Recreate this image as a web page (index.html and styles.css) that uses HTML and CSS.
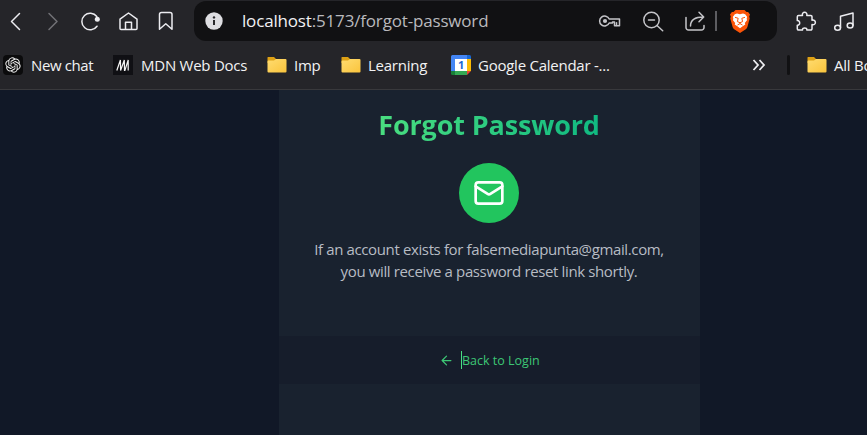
FILE: index.html
```html
<!DOCTYPE html>
<html lang="en">
<head>
<meta charset="utf-8">
<title>Forgot Password</title>
<link rel="stylesheet" href="styles.css">
</head>
<body>
<header class="browser">
  <nav class="toolbar">
    <svg class="icon" viewBox="0 0 24 24"><path d="M16.500 4.500 8.500 12.500l8 8"/></svg>
    <svg class="icon dim" viewBox="0 0 24 24"><path d="m8 4.500 8 8-8 8"/></svg>
    <svg class="icon" viewBox="0 0 24 24"><path d="M18 17.200A8.300 8.300 0 1 1 17.800 7.500"/><circle cx="18.300" cy="10.300" r="2.500" fill="currentColor" stroke="none"/></svg>
    <svg class="icon" viewBox="0 0 24 24"><path d="M3 10.200 11.500 4l8.500 6.200v9.300a1 1 0 0 1-1 1H4a1 1 0 0 1-1-1zM8.500 20.500v-7.300h6v7.300"/></svg>
    <svg class="icon" viewBox="0 0 24 24"><path d="M4.500 20.300V5.500a2 2 0 0 1 2-2h8.500a2 2 0 0 1 2 2v14.800l-6.250-5.500z"/></svg>
    <div class="address">
      <svg class="info" viewBox="0 0 18 18"><circle cx="9" cy="9" r="8.700" fill="#dedee2"/><path d="M9 8v5" stroke="#29292c" stroke-width="2"/><circle cx="9" cy="5.400" r="1.200" fill="#29292c"/></svg>
      <span class="url">localhost<span class="path">:5173/forgot-password</span></span>
      <svg class="icon soft key" viewBox="0 0 24 24"><path d="M11.200 10A5 5 0 1 0 11.200 14H14.500V13h2v3.700h5v-6.700z"/><circle cx="7" cy="12" r="2.100" fill="currentColor" stroke="none"/><path d="M18.500 16.500v-2.700"/></svg>
      <svg class="icon soft lens" viewBox="0 0 24 24"><circle cx="10.500" cy="11" r="7.700"/><path d="m16 16.500 5.700 5.200M7.500 11h6"/></svg>
      <svg class="icon soft share" viewBox="0 0 24 24"><path d="M3 8.500v10a2.500 2.500 0 0 0 2.500 2.500h13a2.500 2.500 0 0 0 2.500-2.500v-2M7.500 17c0-6 3.500-9 13-9M16 3.300 20.700 8 16 12.700"/></svg>
      <i class="rule"></i>
      <svg class="brave" viewBox="0 0 20 23"><path fill="#fb5408" d="M5.500 0h9l2 2 1.600-.1L20 4.600l-.8 2 .5 1.800-2.300 8.700a4 4 0 0 1-1.600 2.200L10 23l-5.800-3.700a4 4 0 0 1-1.600-2.200L.3 8.400l.5-1.800-.8-2 1.900-2.700L3.500 2z"/><path fill="#fff" d="m10 4.200 3-.7 2.200.7 2 2.700-.5 1.400.3 2-2.200 2.700.5 1.400-2.300 1.600L10 18.300 7 16l-2.300-1.600.5-1.400L3 10.300l.3-2-.5-1.400 2-2.700L7 3.500z"/><path d="m5 7.300 3.200 1-.8 3.300 2.600 1.100 2.600-1.100-.8-3.300 3.200-1M7.500 15 10 13.600l2.500 1.400M10 12.700v1" fill="none" stroke="#fb5408"/></svg>
    </div>
    <svg class="icon puzzle" viewBox="0 0 24 24"><path d="M4.500 6.500h4C7.200 2.300 14 2.300 12.800 6.500h4A1.200 1.200 0 0 1 18 7.700v3.500c4.500-1.100 4.500 5.500 0 4.400v4.200a1.200 1.200 0 0 1-1.200 1.200h-4c.6-2.800-4.800-2.800-4.200 0H4.500A1.200 1.200 0 0 1 3.300 19.800v-3.600c3.200.4 3.200-5 0-4.600V7.700a1.200 1.200 0 0 1 1.200-1.200z"/></svg>
    <svg class="icon" viewBox="0 0 24 24"><path d="M8.500 18.500V7.200L21 4v12.300"/><ellipse cx="5.600" cy="18.700" rx="2.900" ry="2.500"/><ellipse cx="18.100" cy="16.500" rx="2.900" ry="2.500"/></svg>
  </nav>
  <nav class="bookmarks">
    <a class="bookmark chat"><svg class="fav" viewBox="0 0 20 20"><rect width="20" height="20" rx="4" fill="#0b0b0c"/><path transform="translate(2.300 2.300) scale(.64)" fill="#f1f1f1" d="M22.2819 9.8211a5.9847 5.9847 0 0 0-.5157-4.9108 6.0462 6.0462 0 0 0-6.5098-2.9A6.0651 6.0651 0 0 0 4.9807 4.1818a5.9847 5.9847 0 0 0-3.9977 2.9 6.0462 6.0462 0 0 0 .7427 7.0966 5.98 5.98 0 0 0 .511 4.9107 6.051 6.051 0 0 0 6.5146 2.9001A5.9847 5.9847 0 0 0 13.2599 24a6.0557 6.0557 0 0 0 5.7718-4.2058 5.9894 5.9894 0 0 0 3.9977-2.9001 6.0557 6.0557 0 0 0-.7475-7.0729zm-9.022 12.6081a4.4755 4.4755 0 0 1-2.8764-1.0408l.1419-.0804 4.7783-2.7582a.7948.7948 0 0 0 .3927-.6813v-6.7369l2.02 1.1686a.071.071 0 0 1 .038.052v5.5826a4.504 4.504 0 0 1-4.4945 4.4944zm-9.6607-4.1254a4.4708 4.4708 0 0 1-.5346-3.0137l.142.0852 4.783 2.7582a.7712.7712 0 0 0 .7806 0l5.8428-3.3685v2.3324a.0804.0804 0 0 1-.0332.0615L9.74 19.9502a4.4992 4.4992 0 0 1-6.1408-1.6464zM2.3408 7.8956a4.485 4.485 0 0 1 2.3655-1.9728V11.6a.7664.7664 0 0 0 .3879.6765l5.8144 3.3543-2.0201 1.1685a.0757.0757 0 0 1-.071 0l-4.8303-2.7865A4.504 4.504 0 0 1 2.3408 7.872zm16.5963 3.8558L13.1038 8.364 15.1192 7.2a.0757.0757 0 0 1 .071 0l4.8303 2.7913a4.4944 4.4944 0 0 1-.6765 8.1042v-5.6772a.79.79 0 0 0-.407-.667zm2.0107-3.0231l-.142-.0852-4.7735-2.7818a.7759.7759 0 0 0-.7854 0L9.409 9.2297V6.8974a.0662.0662 0 0 1 .0284-.0615l4.8303-2.7866a4.4992 4.4992 0 0 1 6.6802 4.66zM8.3065 12.863l-2.02-1.1638a.0804.0804 0 0 1-.038-.0567V6.0742a4.4992 4.4992 0 0 1 7.3757-3.4537l-.142.0805L8.704 5.459a.7948.7948 0 0 0-.3927.6813zm1.0976-2.3654l2.602-1.4998 2.6069 1.4998v2.9994l-2.5974 1.4997-2.6067-1.4997Z"/></svg><span>New chat</span></a>
    <a class="bookmark mdn"><svg class="fav" viewBox="0 0 20 20"><rect width="20" height="20" fill="#101014"/><path d="M3.800 15.500 7.400 5l.2 10.500L11.300 5l.2 10.500h.4L15.200 5v10.500" fill="none" stroke="#f4f4f4" stroke-width="1.200"/></svg><span>MDN Web Docs</span></a>
    <a class="bookmark imp"><svg class="fav" viewBox="0 0 20 20"><use href="#folder"/></svg><span>Imp</span></a>
    <a class="bookmark learning"><svg class="fav" viewBox="0 0 20 20"><use href="#folder"/></svg><span>Learning</span></a>
    <a class="bookmark calendar"><svg class="fav" viewBox="0 0 20 20"><path fill="#4385f4" d="M1.500 0H16v4H4v12H0V1.500A1.500 1.500 0 0 1 1.500 0z"/><path fill="#1967d2" d="M16 0h2.500A1.500 1.500 0 0 1 20 1.500V4h-4z"/><path fill="#fbbc04" d="M16 4h4v12h-4z"/><path fill="#34a853" d="M4 16h12v4H4z"/><path fill="#188038" d="M0 16h4v4H1.500A1.500 1.500 0 0 1 0 18.500z"/><path fill="#ea4335" d="M16 16h4l-4 4z"/><path fill="#fff" d="M4 4h12v12H4z"/><text class="day" x="10" y="14" text-anchor="middle">1</text></svg><span>Google Calendar -...</span></a>
    <svg class="more" viewBox="0 0 14 12"><path d="m1.500 1 4.500 5-4.500 5M7.500 1 12 6l-4.500 5"/></svg>
    <i class="separator"></i>
    <a class="bookmark all"><svg class="fav" viewBox="0 0 20 20"><defs><linearGradient id="foldFill" x2="1" y2="1"><stop stop-color="#ffdc70"/><stop offset="1" stop-color="#fac43c"/></linearGradient></defs><g id="folder"><path fill="#dda014" d="M1 2h6l2 2v4H.500V2.500A.500.500 0 0 1 1 2z"/><path fill="url(#foldFill)" d="M1.500 5.500H7L9 4h9.500a1 1 0 0 1 1 1v11.500a1 1 0 0 1-1 1h-17a1 1 0 0 1-1-1v-10a1 1 0 0 1 1-1z"/></g></svg><span>All Bookmarks</span></a>
  </nav>
</header>
<main class="page">
  <section class="card">
    <h1 class="title"><span>Forgot Password</span></h1>
    <div class="badge"><svg viewBox="0 0 24 24"><rect x="2" y="4" width="20" height="16" rx="2"/><path d="m22 7-8.970 5.700a1.940 1.940 0 0 1-2.060 0L2 7"/></svg></div>
    <p class="message"><span class="line first">If an account exists for falsemediapunta@gmail.com,</span><span class="line second">you will receive a password reset link shortly.</span></p>
    <footer class="footer"><svg class="arrow" viewBox="0 0 24 24"><path d="m12 19-7-7 7-7M19 12H5"/></svg><i class="caret"></i><a class="back">Back to Login</a></footer>
  </section>
</main>
</body>
</html>
```
FILE: styles.css
```css
* { box-sizing: border-box; }
body {
  margin: 0;
  width: 867px;
  height: 435px;
  overflow: hidden;
  display: flex;
  flex-direction: column;
  background: #111827;
  font-family: "Open Sans", "Noto Sans", sans-serif;
}
svg { display: block; flex: none; }
.browser {
  height: 90px;
  flex: none;
  background: #252529;
  border-bottom: 1px solid #39393c;
  overflow: hidden;
}
.toolbar {
  height: 42px;
  display: flex;
  align-items: center;
  padding-left: 3px;
}
.icon {
  width: 24px;
  height: 24px;
  margin-right: 14px;
  fill: none;
  stroke: currentColor;
  stroke-width: 1.5;
  stroke-linecap: round;
  stroke-linejoin: round;
  color: #ececf0;
}
.dim { color: #727277; }
.soft { color: #c5c5c9; margin: 0; }
.address {
  width: 583px;
  height: 40px;
  margin: 0 17px 0 1px;
  padding-left: 11px;
  border-radius: 12px;
  background: #111113;
  display: flex;
  align-items: center;
  flex: none;
}
.puzzle { margin-right: 14px; }
.info { width: 18px; height: 18px; }
.url {
  width: 356px;
  flex: none;
  margin-left: 19px;
  color: #f1f1f3;
  font-size: 17px;
  letter-spacing: -.17px;
  line-height: 24px;
  white-space: nowrap;
}
.path { color: #b9b9bd; }
.lens { margin-left: 19px; }
.share { margin-left: 18px; }
.rule { width: 2px; height: 20px; margin: 0 13px 0 8px; background: #5d5d61; flex: none; }
.brave { width: 20px; height: 23px; }
.bookmarks {
  height: 46px;
  display: flex;
  align-items: center;
  padding-left: 3px;
  color: #f2f2f3;
  font-size: 15px;
  letter-spacing: -.25px;
  line-height: 20px;
  white-space: nowrap;
}
.bookmark { display: flex; align-items: center; gap: 7px; flex: none; }
.fav { width: 20px; height: 20px; }
.day { fill: #1967d2; font: bold 11px "Open Sans", sans-serif; }
.chat { width: 110px; gap: 8px; letter-spacing: -.4px; }
.mdn { width: 154px; gap: 8px; }
.imp { width: 74px; }
.learning { width: 110px; }
.calendar { width: 301px; }
.more { width: 14px; height: 12px; fill: none; stroke: #ededf0; stroke-width: 1.8; }
.separator { width: 3px; height: 20px; margin: 0 17px 0 21px; border-radius: 2px; background: #111113; flex: none; }
.page { flex: 1; display: flex; padding-left: 279px; background: #111827; }
.card {
  width: 421px;
  height: 345px;
  background: #19222f;
  display: flex;
  flex-direction: column;
  align-items: center;
  padding-top: 16px;
}
.title { margin: 0 1px 0 0; height: 38px; font-size: 27px; font-weight: 700; letter-spacing: -.15px; line-height: 38px; white-space: nowrap; }
.title span { background: linear-gradient(90deg, #4ade80, #10b981); background-clip: text; -webkit-background-clip: text; color: transparent; }
.badge { width: 60px; height: 60px; margin: 19px 1px 0 0; border-radius: 50%; background: #22c55e; display: flex; align-items: center; justify-content: center; flex: none; }
.badge svg { width: 32px; height: 32px; fill: none; stroke: #fff; stroke-width: 2; stroke-linecap: round; stroke-linejoin: round; }
.message { margin: 15px 1px 0 0; color: #b7bcc4; font-size: 15px; letter-spacing: -.37px; line-height: 22px; text-align: center; white-space: nowrap; }
.line { display: block; }
.footer { width: 100%; height: 48px; margin-top: 54px; background: #161d2b; display: flex; align-items: center; color: #3dc675; padding-left: 160px; flex: none; }
.arrow { width: 15px; height: 15px; fill: none; stroke: currentColor; stroke-width: 2; stroke-linecap: round; stroke-linejoin: round; }
.caret { width: 1px; height: 18px; margin: 0 0 1px 7px; background: #4ade80; }
.back { height: 18px; font-size: 12.500px; line-height: 20px; white-space: nowrap; }
```
